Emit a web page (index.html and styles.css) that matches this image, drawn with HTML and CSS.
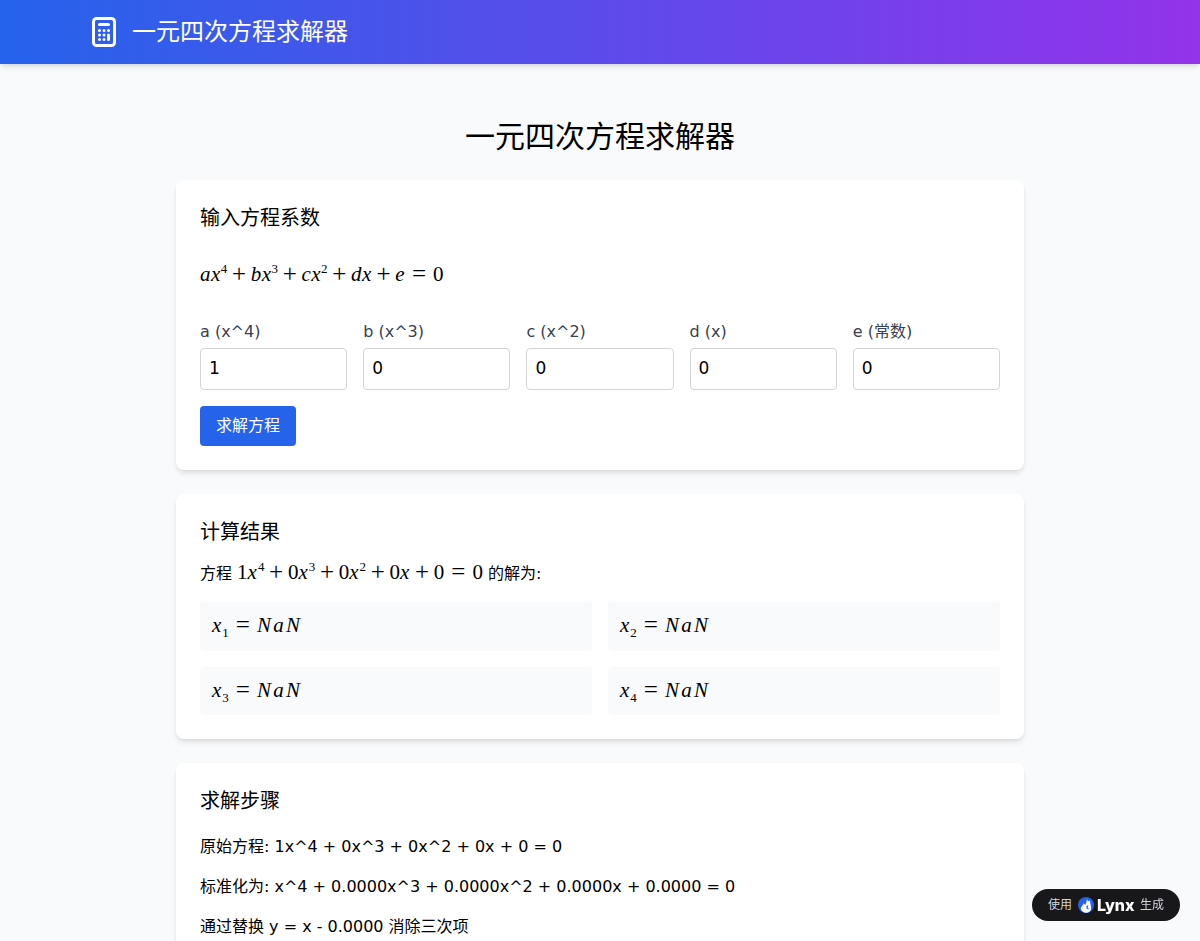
FILE: index.html
```html
<!DOCTYPE html>
<html lang="zh-CN">
<head>
    <meta charset="UTF-8" />
    <title>一元四次方程求解器</title>
    <link rel="stylesheet" href="styles.css">
</head>

<body>
    <header class="topbar">
        <div class="topbar-inner">
            <svg class="topbar-icon" viewBox="0 0 24 24" fill="none" stroke="currentColor" stroke-width="2" stroke-linecap="round" stroke-linejoin="round">
                <path d="M9 7h6m0 10v-3m-3 3h.01M9 17h.01M9 14h.01M12 14h.01M15 11h.01M12 11h.01M9 11h.01M7 21h10a2 2 0 002-2V5a2 2 0 00-2-2H7a2 2 0 00-2 2v14a2 2 0 002 2z"/>
            </svg>
            <span class="topbar-title">一元四次方程求解器</span>
        </div>
    </header>

    <main class="main">
        <h1 class="page-title">一元四次方程求解器</h1>

        <section class="card">
            <h2 class="card-title">输入方程系数</h2>
            <div class="formula">
                <span class="math"><i>ax</i><sup>4</sup><b>+</b><i>bx</i><sup>3</sup><b>+</b><i>cx</i><sup>2</sup><b>+</b><i>dx</i><b>+</b><i>e</i><b class="rel">=</b>0</span>
            </div>
            <div class="coef-grid">
                <div class="coef">
                    <label class="coef-label">a (x^4)</label>
                    <input class="coef-input" type="text" value="1">
                </div>
                <div class="coef">
                    <label class="coef-label">b (x^3)</label>
                    <input class="coef-input" type="text" value="0">
                </div>
                <div class="coef">
                    <label class="coef-label">c (x^2)</label>
                    <input class="coef-input" type="text" value="0">
                </div>
                <div class="coef">
                    <label class="coef-label">d (x)</label>
                    <input class="coef-input" type="text" value="0">
                </div>
                <div class="coef">
                    <label class="coef-label">e (常数)</label>
                    <input class="coef-input" type="text" value="0">
                </div>
            </div>
            <button class="solve-btn" type="button">求解方程</button>
        </section>

        <section class="card">
            <h2 class="card-title">计算结果</h2>
            <p class="result-line">方程 <span class="math">1<i>x</i><sup>4</sup><b>+</b>0<i>x</i><sup>3</sup><b>+</b>0<i>x</i><sup>2</sup><b>+</b>0<i>x</i><b>+</b>0<b class="rel">=</b>0</span> 的解为:</p>
            <div class="root-grid">
                <div class="root"><span class="math"><i>x</i><sub>1</sub><b class="rel">=</b><i class="nan">NaN</i></span></div>
                <div class="root"><span class="math"><i>x</i><sub>2</sub><b class="rel">=</b><i class="nan">NaN</i></span></div>
                <div class="root"><span class="math"><i>x</i><sub>3</sub><b class="rel">=</b><i class="nan">NaN</i></span></div>
                <div class="root"><span class="math"><i>x</i><sub>4</sub><b class="rel">=</b><i class="nan">NaN</i></span></div>
            </div>
        </section>

        <section class="card">
            <h2 class="card-title">求解步骤</h2>
            <div class="steps">
                <p class="step">原始方程: 1x^4 + 0x^3 + 0x^2 + 0x + 0 = 0</p>
                <p class="step">标准化为: x^4 + 0.0000x^3 + 0.0000x^2 + 0.0000x + 0.0000 = 0</p>
                <p class="step">通过替换 y = x - 0.0000 消除三次项</p>
            </div>
        </section>
    </main>

    <div class="badge">
        <span>使用</span>
        <svg class="badge-logo" viewBox="0 0 16 16">
            <circle cx="8" cy="8" r="8" fill="#2563eb"/>
            <path d="M8.8 1.8 L10 4.2 L12 3.4 L12.4 7 C13.2 9.6 13.4 11.6 12.6 13.4 C11.4 15 9.6 15.8 7.6 15.8 C5 15.4 3 13.6 2.8 11.4 C3 9.6 5 8.6 5.8 6.2 C6.6 6.8 7 7.4 7.2 8 C8.2 6.4 8.9 4.2 8.8 1.8 Z" fill="#fff"/>
            <path d="M8.4 9 L10.4 8 L9.6 10.6 L11.6 12.4 L8.4 11.6 Z" fill="#2563eb"/>
        </svg>
        <span class="badge-brand">Lynx</span>
        <span>生成</span>
    </div>
</body>

</html>
```

FILE: styles.css
```css
*{
    margin: 0;
    padding: 0;
    box-sizing: border-box;
}
html,body{
    height: 100%;
    overflow: hidden;
}
body{
    font-family: "DejaVu Sans", "Noto Sans CJK SC", sans-serif;
    font-size: 16px;
    line-height: 24px;
    color: #000;
    background-color: #f9fafb;
}

.topbar{
    height: 64px;
    background-image: linear-gradient(to right, #2563eb, #9333ea);
    box-shadow: 0 4px 6px -1px rgba(0,0,0,.1), 0 2px 4px -2px rgba(0,0,0,.1);
    color: #fff;
}
.topbar-inner{
    display: flex;
    align-items: center;
    gap: 10px;
    width: 1028px;
    height: 100%;
    margin: 0 auto;
}
.topbar-icon{
    width: 36px;
    height: 36px;
}
.topbar-title{
    font-size: 24px;
    line-height: 32px;
}

.main{
    width: 896px;
    margin: 0 auto;
    padding: 55px 24px 24px;
}
.page-title{
    margin-bottom: 25px;
    font-size: 30px;
    line-height: 36px;
    font-weight: 400;
    text-align: center;
}

.card{
    margin-bottom: 24px;
    padding: 24px;
    background-color: #fff;
    border-radius: 8px;
    box-shadow: 0 4px 6px -1px rgba(0,0,0,.1), 0 2px 4px -2px rgba(0,0,0,.1);
}
.card-title{
    margin-bottom: 16px;
    font-size: 20px;
    line-height: 28px;
    font-weight: 400;
}

.math{
    font-family: "Liberation Serif", serif;
    font-size: 21px;
    line-height: 0;
    white-space: nowrap;
}
.math i{
    letter-spacing: 1px;
}
.math b{
    margin: 0 4.7px;
    font-size: 25px;
    font-weight: 400;
    line-height: 0;
    vertical-align: -1px;
}
.math b.rel{
    margin: 0 7px;
}
.math sup,.math sub{
    font-size: 13px;
    line-height: 0;
}
.math .nan{
    letter-spacing: 2.3px;
}

.formula{
    display: flex;
    align-items: center;
    height: 46px;
    margin-bottom: 26px;
}
.formula .math i{
    letter-spacing: .45px;
}

.coef-grid{
    display: grid;
    grid-template-columns: repeat(5, 1fr);
    gap: 16px;
    margin-bottom: 16px;
}
.coef-label{
    display: block;
    margin-bottom: 4px;
    color: #374151;
}
.coef-input{
    display: block;
    width: 100%;
    height: 42px;
    padding: 7px 8px 9px;
    border: 1px solid #d1d5db;
    border-radius: 4px;
    font-family: inherit;
    font-size: 17px;
    color: #000;
    background-color: #fff;
}

.solve-btn{
    display: block;
    width: 96px;
    height: 40px;
    border: 0;
    border-radius: 4px;
    font-family: inherit;
    font-size: 16px;
    line-height: 24px;
    color: #fff;
    background-color: #2563eb;
}

.result-line{
    margin-bottom: 16px;
}
.root-grid{
    display: grid;
    grid-template-columns: repeat(2, 1fr);
    gap: 16px;
}
.root{
    height: 48.5px;
    padding: 13px 12px 11px;
    border-radius: 4px;
    background-color: #f9fafb;
}

.steps{
    padding-top: 4px;
}
.step{
    margin-bottom: 16px;
}

.badge{
    position: fixed;
    right: 20px;
    bottom: 20px;
    display: flex;
    align-items: center;
    height: 32px;
    padding: 0 16px;
    border-radius: 16px;
    font-size: 12px;
    color: #d1d5db;
    background-color: #18181b;
}
.badge-logo{
    width: 16px;
    height: 16px;
    margin: 0 3px 0 6px;
}
.badge-brand{
    width: 38px;
    margin-right: 5px;
    font-family: Inter, sans-serif;
    font-size: 16px;
    font-weight: 800;
    color: #fff;
}
```
